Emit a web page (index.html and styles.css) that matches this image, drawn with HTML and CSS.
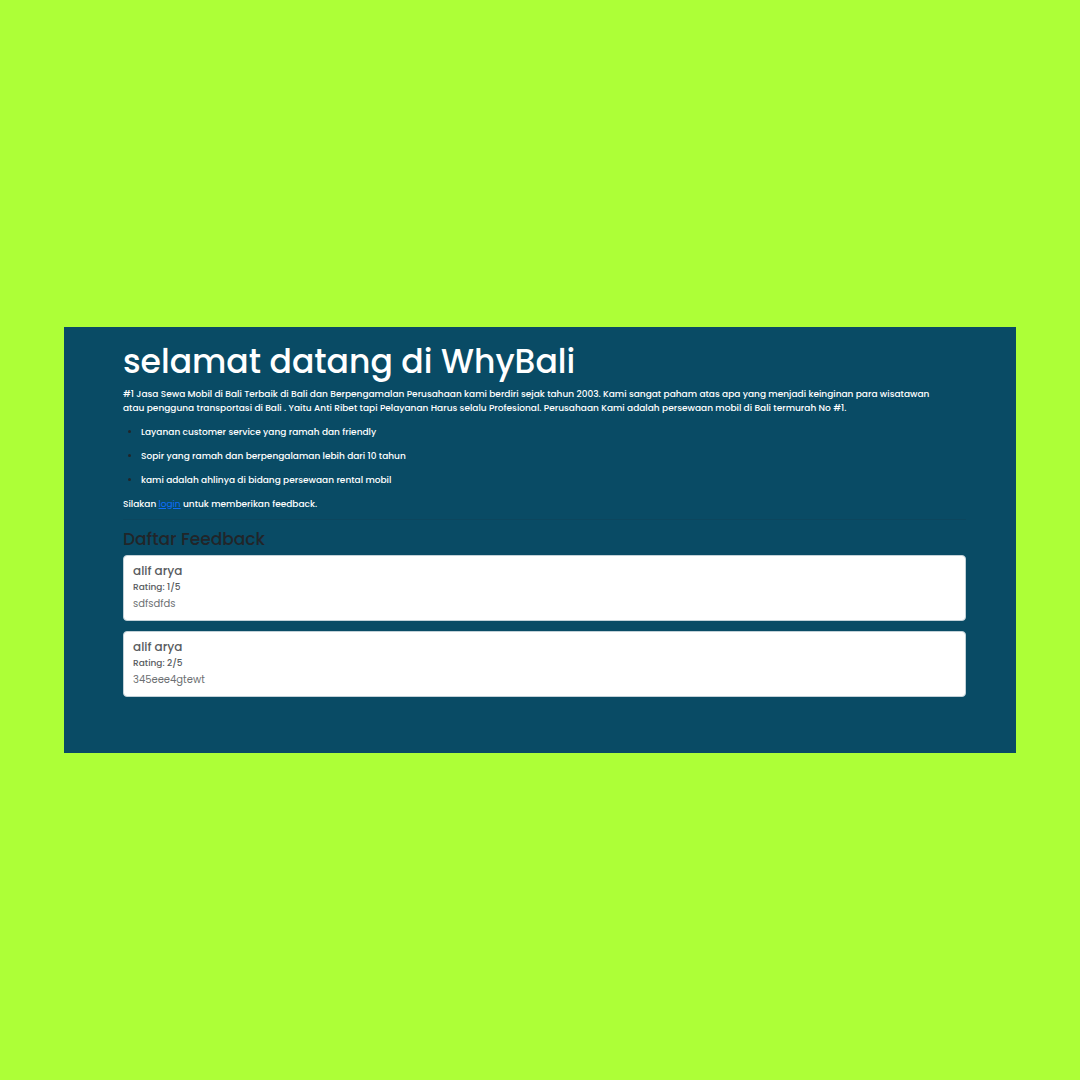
FILE: index.html
```html
<!DOCTYPE html>
<html lang="id">
<head>
<meta charset="utf-8">
<meta name="viewport" content="width=device-width, initial-scale=1">
<title>WhyBali</title>
<link rel="stylesheet" href="styles.css">
</head>
<body>
<main class="panel">
  <h1 class="title">selamat datang di WhyBali</h1>
  <p class="text">#1 Jasa Sewa Mobil di Bali Terbaik di Bali dan Berpengamalan Perusahaan kami berdiri sejak tahun 2003. Kami sangat paham atas apa yang menjadi keinginan para wisatawan<br>atau pengguna transportasi di Bali . Yaitu Anti Ribet tapi Pelayanan Harus selalu Profesional. Perusahaan Kami adalah persewaan mobil di Bali termurah No #1.</p>
  <ul class="services">
    <li><p class="text">Layanan customer service yang ramah dan friendly</p></li>
    <li><p class="text">Sopir yang ramah dan berpengalaman lebih dari 10 tahun</p></li>
    <li><p class="text">kami adalah ahlinya di bidang persewaan rental mobil</p></li>
  </ul>
  <p class="text">Silakan <a class="link" href="#login">login</a> untuk memberikan feedback.</p>
  <hr class="divider">
  <h2 class="subtitle">Daftar Feedback</h2>
  <div class="feedback-list">
    <article class="card">
      <h3 class="card-name">alif arya</h3>
      <h4 class="card-rating">Rating: 1/5</h4>
      <p class="card-text">sdfsdfds</p>
    </article>
    <article class="card">
      <h3 class="card-name">alif arya</h3>
      <h4 class="card-rating">Rating: 2/5</h4>
      <p class="card-text">345eee4gtewt</p>
    </article>
  </div>
</main>
</body>
</html>
```
FILE: styles.css
```css
* {
  box-sizing: border-box;
}

body {
  margin: 0;
  min-height: 100vh;
  display: flex;
  align-items: center;
  padding: 0 64px;
  background: #adff37;
  color: #212529;
  font-family: Poppins, Inter, sans-serif;
  font-size: 9px;
  line-height: 14px;
}

h1, h2, h3, h4, p {
  margin: 0;
  font-weight: 500;
}

.panel {
  flex: 1;
  padding: 14px 50px 56px 59px;
  background: #094b65;
}

.title {
  margin-bottom: 4px;
  color: #fff;
  font-size: 33px;
  line-height: 42px;
}

.text {
  margin-bottom: 10px;
  color: #fff;
}

.services {
  margin: 0;
  padding-left: 18px;
}

.link {
  color: #0d6efd;
  font-weight: 400;
}

.divider {
  margin: -2px 0 9px;
  border: 0;
  border-top: 1px solid #0c465e;
}

.subtitle {
  margin-bottom: 6px;
  font-size: 17px;
  line-height: 20px;
}

.feedback-list {
  display: grid;
  gap: 10px;
}

.card {
  padding: 7px 9px 9px;
  border: 1px solid #c2d1d8;
  border-radius: 4px;
  background: #fff;
  color: #595c5f;
}

.card-name {
  margin-bottom: 1px;
  font-size: 12px;
  line-height: 16px;
}

.card-rating {
  margin-bottom: 3px;
  font-size: 9px;
}

.card-text {
  color: #6c6f72;
  font-size: 10px;
  font-weight: 400;
}
```
